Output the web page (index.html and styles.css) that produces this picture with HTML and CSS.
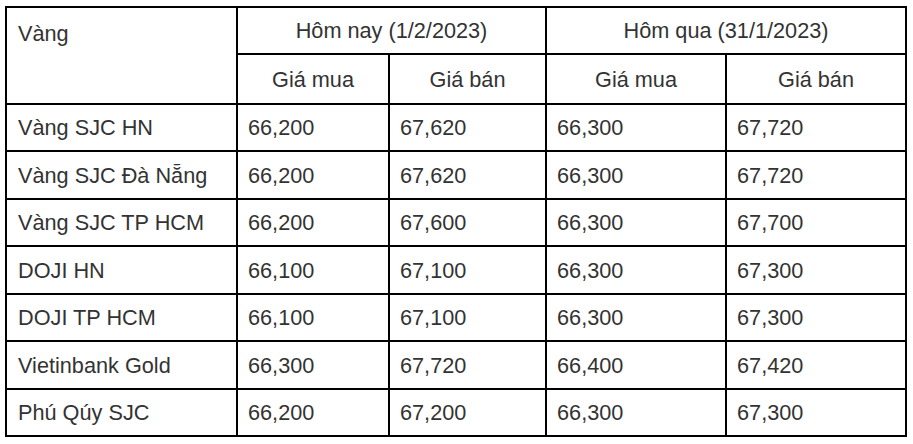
FILE: index.html
```html
<!DOCTYPE html>
<html lang="vi">
<head>
<meta charset="utf-8">
<title>Giá vàng</title>
<link rel="stylesheet" href="styles.css">
</head>
<body>
<table class="gold">
  <colgroup>
    <col class="c-name">
    <col class="c-a">
    <col class="c-b">
    <col class="c-c">
    <col class="c-d">
  </colgroup>
  <thead>
    <tr class="h1">
      <th class="name-head" rowspan="2">Vàng</th>
      <th colspan="2">Hôm nay (1/2/2023)</th>
      <th colspan="2">Hôm qua (31/1/2023)</th>
    </tr>
    <tr class="h2">
      <th>Giá mua</th>
      <th>Giá bán</th>
      <th>Giá mua</th>
      <th>Giá bán</th>
    </tr>
  </thead>
  <tbody>
    <tr class="r47"><td>Vàng SJC HN</td><td>66,200</td><td>67,620</td><td>66,300</td><td>67,720</td></tr>
    <tr class="r48"><td>Vàng SJC Đà Nẵng</td><td>66,200</td><td>67,620</td><td>66,300</td><td>67,720</td></tr>
    <tr class="r47"><td>Vàng SJC TP HCM</td><td>66,200</td><td>67,600</td><td>66,300</td><td>67,700</td></tr>
    <tr class="r48"><td>DOJI HN</td><td>66,100</td><td>67,100</td><td>66,300</td><td>67,300</td></tr>
    <tr class="r47"><td>DOJI TP HCM</td><td>66,100</td><td>67,100</td><td>66,300</td><td>67,300</td></tr>
    <tr class="r48"><td>Vietinbank Gold</td><td>66,300</td><td>67,720</td><td>66,400</td><td>67,420</td></tr>
    <tr class="r47"><td>Phú Qúy SJC</td><td>66,200</td><td>67,200</td><td>66,300</td><td>67,300</td></tr>
  </tbody>
</table>
</body>
</html>
```

FILE: styles.css
```css
html, body {
  margin: 0;
  padding: 0;
  background: #fff;
}

body {
  padding: 6px 0 0 5px;
}

.gold {
  border-collapse: separate;
  border-spacing: 0;
  table-layout: fixed;
  width: 902px;
  border-top: 2px solid #000;
  border-left: 2px solid #000;
  font-family: "Liberation Sans", Arial, sans-serif;
  font-size: 21.7px;
  color: #333;
}

.c-name { width: 231px; }
.c-a { width: 152px; }
.c-b { width: 157px; }
.c-c { width: 180px; }
.c-d { width: 180px; }

.gold th,
.gold td {
  border-right: 2px solid #000;
  border-bottom: 2px solid #000;
  padding: 0 0 0 10px;
  font-weight: normal;
  text-align: left;
  vertical-align: middle;
  box-sizing: border-box;
  white-space: nowrap;
  line-height: 25px;
}

.gold thead th {
  text-align: center;
  padding: 0;
}

.gold thead th.name-head {
  text-align: left;
  vertical-align: top;
  padding: 13px 0 0 11px;
}

.gold tbody td:first-child {
  padding-left: 11px;
}

.h1 { height: 47px; }
.h2 { height: 50px; }
.r47 { height: 47px; }
.r48 { height: 48px; }
```
